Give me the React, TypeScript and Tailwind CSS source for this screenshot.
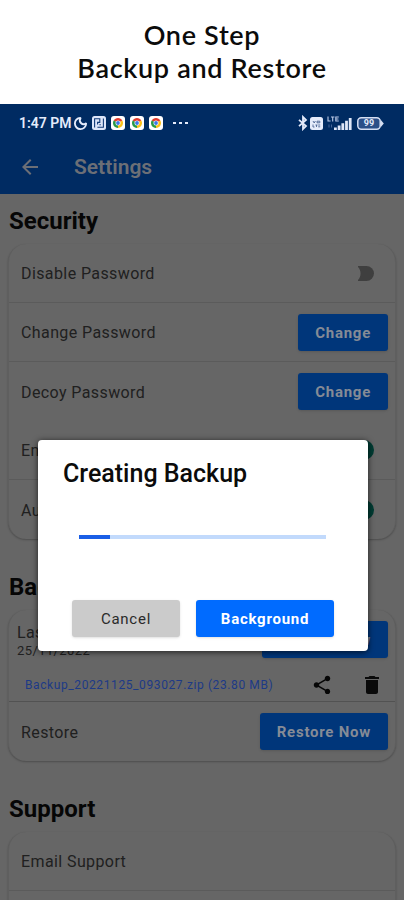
import type { ReactNode } from "react";
import { Moon } from "lucide-react";
import { MdArrowBack, MdDelete, MdShare } from "react-icons/md";

function ChromeIcon() {
    return (
        <svg viewBox="0 0 14 14" className="w-[14px] h-[14px]" aria-hidden="true">
            <rect width="14" height="14" rx="3" fill="#fff" />
            <path d="M7 7 L2.67 4.5 A5 5 0 0 1 11.33 4.5 Z" fill="#e23b2e" />
            <path d="M7 7 L11.33 4.5 A5 5 0 0 1 7 12 Z" fill="#fbc116" />
            <path d="M7 7 L7 12 A5 5 0 0 1 2.67 4.5 Z" fill="#279847" />
            <circle cx="7" cy="7" r="2.5" fill="#fff" />
            <circle cx="7" cy="7" r="1.9" fill="#3b78e7" />
        </svg>
    );
}

function NewsIcon() {
    return (
        <svg viewBox="0 0 14 14" className="w-[14px] h-[14px]" aria-hidden="true">
            <rect width="14" height="14" rx="2.5" fill="#dde6fa" />
            <path d="M2.6 11.5V2.8h5.2v3.6H5.6v2.2M5.4 11.3h6V2.6M8.8 8.8H7.4" fill="none" stroke="#103a78" strokeWidth="1.1" />
        </svg>
    );
}

function BluetoothIcon() {
    return (
        <svg viewBox="0 0 12 16" className="w-3 h-4 mr-[1px]" aria-hidden="true">
            <path d="M2 4.8 9 11 6 14V2l3 3-7 6.2" fill="none" stroke="#e4ebfb" strokeWidth="1.8" />
        </svg>
    );
}

function VolteIcon() {
    return (
        <svg viewBox="0 0 13 13" className="w-[13px] h-[13px]" aria-hidden="true">
            <rect width="13" height="13" rx="2.5" fill="#e6ecfb" />
            <path d="M3 4l1.2 2L5.4 4M7 4.2h2.8v1.6H7zM3 7.5V10h1.5M5.5 8h2M6.5 8v2M8.2 8h2M8.2 9.8h2" fill="none" stroke="#4a6392" strokeWidth="0.9" />
        </svg>
    );
}

function SignalIcon() {
    return (
        <svg viewBox="0 0 25 15" className="w-[25px] h-[15px]" aria-hidden="true">
            <path d="M1 0.5V5h2.6M4 1h3.4M5.7 1v4.4M11.8 1H8.8v4h3M8.8 3h2.6" fill="none" stroke="#b9c8e6" strokeWidth="1.1" />
            <path d="M2 8.5v3M4.5 8.5v3" stroke="#4d6c9e" strokeWidth="0.9" />
            <path d="M7 11.5h2.8V14H7zM10.7 9.5h2.8V14h-2.8zM14.4 7.2h2.8V14h-2.8zM18.1 4.8h2.8V14h-2.8zM21.8 2h2.8v12h-2.8z" fill="#dfe7f8" />
        </svg>
    );
}

function Battery() {
    return (
        <span className="relative flex items-center justify-center w-[27px] h-[13px]">
            <svg viewBox="0 0 27 13" className="absolute inset-0 w-full h-full" aria-hidden="true">
                <rect x="0.8" y="0.8" width="22.4" height="11.4" rx="3.4" fill="#2b4f88" stroke="#d5def2" strokeWidth="1.5" />
                <path d="M23.5 2.4 26.8 6.5 23.5 10.6z" fill="#d5def2" />
            </svg>
            <span className="relative pr-[3px] text-[9px] leading-none font-bold text-[#e4ebfb]">99</span>
        </span>
    );
}

function StatusBar() {
    return (
        <div className="flex items-center justify-between h-[38px] pl-[19px] pr-5 text-[#e4ebfb]">
            <div className="flex items-center">
                <span className="text-[14px] leading-none font-semibold">1:47 PM</span>
                <Moon className="ml-[1px] mr-1 w-[15px] h-[15px]" strokeWidth={3} />
                <div className="flex items-center gap-[5px]">
                    <NewsIcon />
                    <ChromeIcon />
                    <ChromeIcon />
                    <ChromeIcon />
                </div>
                <span className="flex gap-[3px] ml-[10px]">
                    <i className="w-[3px] h-[2px] bg-[#e4ebfb]" />
                    <i className="w-[3px] h-[2px] bg-[#e4ebfb]" />
                    <i className="w-[3px] h-[2px] bg-[#e4ebfb]" />
                </span>
            </div>
            <div className="flex items-center">
                <BluetoothIcon />
                <VolteIcon />
                <span className="flex ml-1 mr-[5px]">
                    <SignalIcon />
                </span>
                <Battery />
            </div>
        </div>
    );
}

function Section({ title, children }: { title: string; children: ReactNode }) {
    return (
        <section>
            <h2 className="mb-[7px] pl-[1px] text-[24px] leading-8 font-bold text-[#060606]">{title}</h2>
            <div className="rounded-[18px] bg-[#666] border-x border-[#5f5f5f] shadow-[0_1px_2px_rgba(0,0,0,0.25)]">
                {children}
            </div>
        </section>
    );
}

function Row({ label, divider, children }: { label: string; divider?: boolean; children?: ReactNode }) {
    return (
        <div className={`flex items-center justify-between h-[59px] pl-3 pr-[7px] ${divider ? "border-b border-[#5b5b5b]" : ""}`}>
            <span className="pt-[2px] text-[16px] leading-5 tracking-wide text-[#202020]">{label}</span>
            {children}
        </div>
    );
}

function ActionButton({ children }: { children: ReactNode }) {
    return (
        <button className="h-[37px] px-[17px] pt-[2px] rounded-[3px] bg-[#00367a] text-[15px] font-bold tracking-wider text-[#858b96] shadow-sm">
            {children}
        </button>
    );
}

export default function App() {
    return (
        <div className="flex flex-col h-screen overflow-hidden bg-white font-[Roboto,sans-serif]">
            <header className="pt-[18px] h-[104px] shrink-0 text-center">
                <h1 className="font-[Lato,sans-serif] text-[27px] leading-[33px] font-semibold tracking-wide text-[#0b0b0b]">
                    One Step
                    <br />
                    Backup and Restore
                </h1>
            </header>

            <main className="relative flex-1 overflow-hidden bg-[#666]">
                <div className="h-[90px] bg-[#002b62]">
                    <StatusBar />
                    <div className="flex items-center h-[50px] pl-[18px] text-[#6c6f76]">
                        <button aria-label="Back">
                            <MdArrowBack className="w-6 h-6" />
                        </button>
                        <h2 className="ml-8 text-[21px] leading-6 font-semibold">Settings</h2>
                    </div>
                </div>

                {/* Settings list */}
                <div className="flex flex-col gap-8 px-2 pt-[11px]">
                    <Section title="Security">
                        <Row label="Disable Password" divider>
                            <input
                                type="checkbox"
                                role="switch"
                                aria-label="Disable Password"
                                className="appearance-none mr-[14px] w-4 h-[15px] rounded-r-full bg-[radial-gradient(circle_at_-7px_center,#666_9px,#3f3f3f_10px)]"
                            />
                        </Row>
                        <Row label="Change Password" divider>
                            <ActionButton>Change</ActionButton>
                        </Row>
                        <Row label="Decoy Password">
                            <ActionButton>Change</ActionButton>
                        </Row>
                        <Row label="Enable Fingerprint" divider>
                            <input
                                type="checkbox"
                                role="switch"
                                defaultChecked
                                aria-label="Enable Fingerprint"
                                className="appearance-none mr-[14px] w-5 h-5 rounded-full bg-[#003c33]"
                            />
                        </Row>
                        <Row label="Auto Backup">
                            <input
                                type="checkbox"
                                role="switch"
                                defaultChecked
                                aria-label="Auto Backup"
                                className="appearance-none mr-[14px] w-5 h-5 rounded-full bg-[#003c33]"
                            />
                        </Row>
                    </Section>

                    <Section title="Backup">
                        <div className="flex items-center justify-between h-[59px] pl-2 pr-[7px]">
                            <div className="pt-[2px] tracking-wide text-[#202020]">
                                <p className="text-[16px] leading-5">Last Backup</p>
                                <p className="text-[13px] leading-4">25/11/2022</p>
                            </div>
                            <ActionButton>Backup Now</ActionButton>
                        </div>
                        <div className="flex items-center h-[33px] pl-4 pr-[11px] border-b border-[#525252]">
                            <a href="#backup" className="text-[12px] leading-4 tracking-wider text-[#1d3a86]">
                                Backup_20221125_093027.zip (23.80 MB)
                            </a>
                            <button aria-label="Share backup" className="ml-auto mr-[27px] text-[#060606]">
                                <MdShare className="w-[22px] h-[22px]" />
                            </button>
                            <button aria-label="Delete backup" className="text-[#0a0a0a]">
                                <MdDelete className="w-6 h-6" />
                            </button>
                        </div>
                        <Row label="Restore">
                            <ActionButton>Restore Now</ActionButton>
                        </Row>
                    </Section>

                    <Section title="Support">
                        <Row label="Email Support" divider />
                        <div className="h-[59px]" />
                    </Section>
                </div>

                {/* Progress dialog */}
                <div
                    role="dialog"
                    aria-labelledby="dialog-title"
                    className="absolute top-84 left-[38px] right-9 rounded-[4px] bg-white shadow-[0_1px_6px_rgba(0,0,0,0.7)]"
                >
                    <h2 id="dialog-title" className="pt-[18px] pl-[25px] text-[25px] leading-8 font-medium text-[#0b0b0b]">
                        Creating Backup
                    </h2>
                    <div className="mt-[45px] ml-[41px] mr-[42px] h-1 bg-[#c2dafc]" role="progressbar" aria-valuenow={12} aria-label="Backup progress">
                        <div className="h-full bg-[#1a5fe6]" style={{ width: "12.5%" }} />
                    </div>
                    <div className="flex gap-4 pt-[61px] pb-[14px] px-[34px]">
                        <button className="flex-[108] h-[37px] pt-[2px] rounded-[3px] bg-[#cbcbcb] text-[15px] tracking-wider text-[#2a2a2a] shadow-sm">
                            Cancel
                        </button>
                        <button className="flex-[138] h-[37px] pt-[2px] rounded-[3px] bg-[#006bff] text-[15px] font-bold tracking-wider text-white shadow-sm">
                            Background
                        </button>
                    </div>
                </div>
            </main>
        </div>
    );
}
